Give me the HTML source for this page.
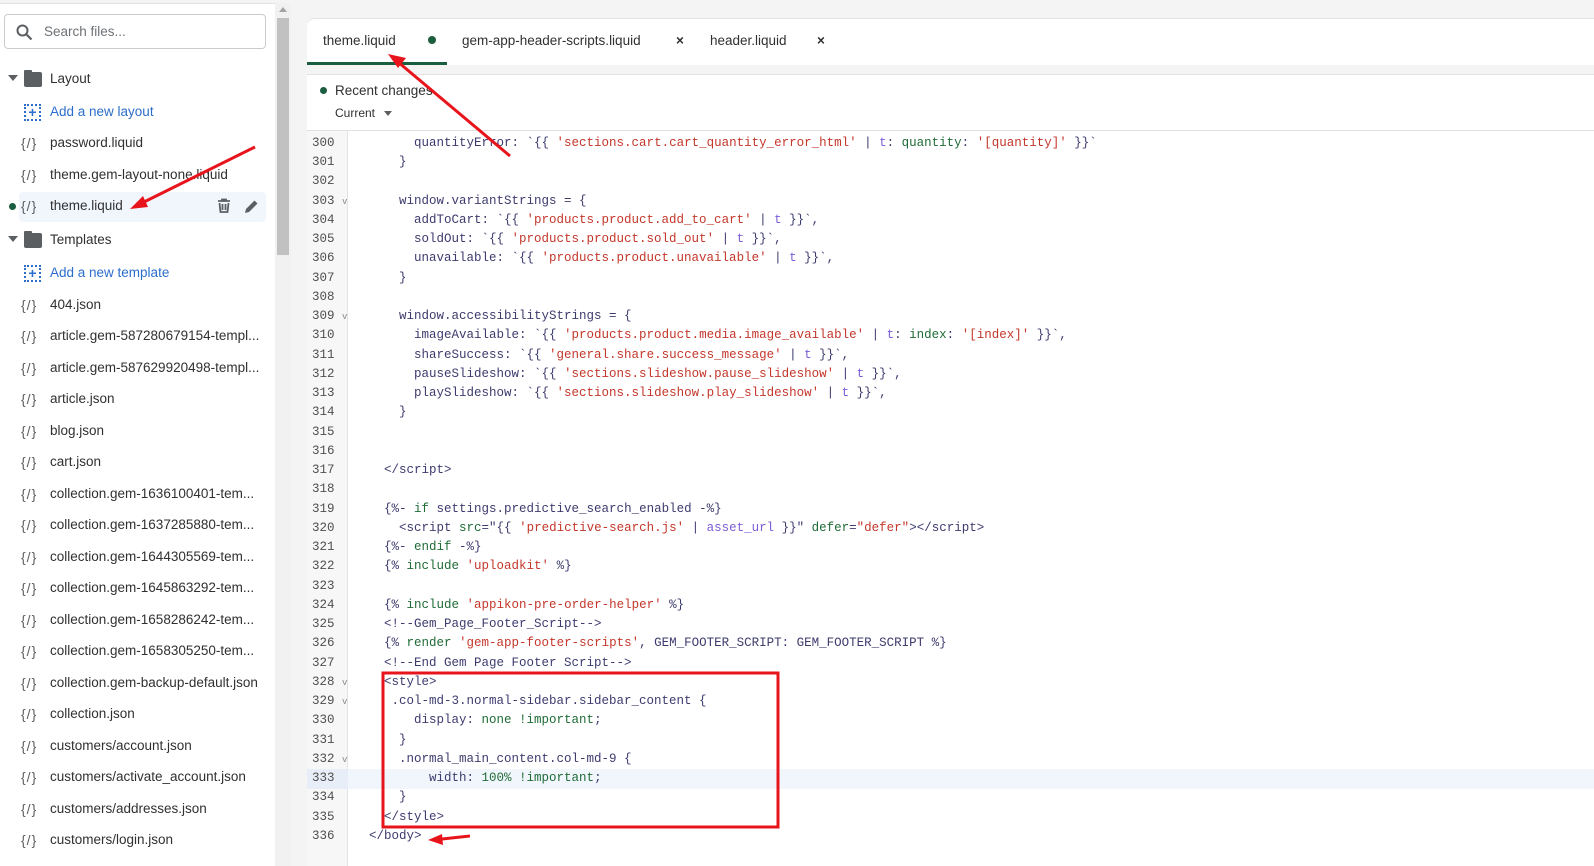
<!DOCTYPE html>
<html><head><meta charset="utf-8"><style>
*{margin:0;padding:0;box-sizing:border-box}
body{width:1594px;height:866px;overflow:hidden;background:#f4f4f4;font-family:"Liberation Sans",sans-serif;position:relative}
.side{position:absolute;left:0;top:3px;width:275px;height:863px;background:#fff;border-top:1px solid #e3e3e3}
.sb{position:absolute;left:275px;top:3px;width:16px;height:863px;background:#f1f1f1}
.thumb{position:absolute;left:277px;top:18px;width:12px;height:237px;background:#c1c1c1}
.search{position:absolute;left:4px;top:14px;width:262px;height:35px;border:1px solid #c9cccf;border-radius:4px;background:#fff}
.search span{position:absolute;left:39px;top:9px;font-size:13.5px;color:#6d7175}
.row{position:absolute;left:0;height:30px;width:270px;font-size:13.5px;color:#303030;line-height:30px}
.row .ic{position:absolute;left:21px;top:0;font-size:14px;color:#5c5f62;letter-spacing:1px}
.row .t{position:absolute;left:50px}
.blue{color:#2c6ecb}
.tabs{position:absolute;left:307px;top:18px;width:1287px;height:47px;background:#fff;border-radius:8px 0 0 0;border-top:1px solid #e1e1e1}
.tab{position:absolute;top:14px;font-size:13.5px;color:#303030}
.panel{position:absolute;left:307px;top:74px;width:1287px;height:792px;background:#fff;border-top:1px solid #e1e1e1}
.gut{position:absolute;left:307px;top:131px;width:41px;height:735px;background:#f7f7f7;border-right:1px solid #e4e4e4}
.code{position:absolute;left:0;top:0;width:1594px;height:866px;font-family:"Liberation Mono",monospace;font-size:12.5px}
.l{position:absolute;left:354px;white-space:pre;color:#3d3b6e;height:19px;line-height:19px}
.n{position:absolute;left:312px;color:#4f4f4f;height:19px;line-height:19px;font-family:"Liberation Mono",monospace;font-size:12.5px}
.n small{font-size:9px;color:#888}
.s{color:#c4372b}.k{color:#1f6b36}.p{color:#7b5cd6}
.fold{position:absolute;left:24px;top:8px;width:18px;height:15px;background:#5c5f62;border-radius:1px 2px 2px 2px}
.fold:before{content:"";position:absolute;left:0;top:-2px;width:8px;height:3px;background:#5c5f62;border-radius:1px 1px 0 0}
</style></head><body>
<div class="side"></div>
<div class="sb"></div><div class="thumb"></div>
<div style="position:absolute;left:279px;top:7px;border:4px solid transparent;border-bottom:5px solid #a3a3a3;border-top:0"></div>
<div class="search"><svg style="position:absolute;left:11px;top:9px" width="17" height="17" viewBox="0 0 17 17"><circle cx="6.5" cy="6.5" r="5" fill="none" stroke="#5c5f62" stroke-width="2"/><path d="M10 10l5.5 5.5" stroke="#5c5f62" stroke-width="2.2"/></svg><span>Search files...</span></div>

<div class="row" style="top:64px"><span style="position:absolute;left:8px;top:11px;border:5px solid transparent;border-top:6px solid #5c5f62;border-bottom:0"></span><span class="fold"></span><span class="t">Layout</span></div>
<div class="row" style="top:97px"><span style="position:absolute;left:24px;top:7px;width:17px;height:17px;border:2px dotted #2c6ecb;color:#2c6ecb;font-size:14px;line-height:12px;text-align:center;font-weight:bold">+</span><span class="t blue">Add a new layout</span></div>
<div class="row" style="top:128px"><span class="ic">{/}</span><span class="t">password.liquid</span></div>
<div class="row" style="top:160px"><span class="ic">{/}</span><span class="t">theme.gem-layout-none.liquid</span></div>
<div class="row" style="top:192px;left:19px;width:247px;background:#f1f6fd;border-radius:4px"></div>
<div style="position:absolute;left:9px;top:203px;width:7px;height:7px;border-radius:50%;background:#1a5d3f"></div>
<div class="row" style="top:191px"><span class="ic">{/}</span><span class="t">theme.liquid</span>
<svg style="position:absolute;left:216px;top:7px" width="16" height="16" viewBox="0 0 16 16"><path d="M2 3h12M6 3V1.5h4V3M3.5 5l1 9h7l1-9M6.5 6v6M9.5 6v6" stroke="#5c5f62" stroke-width="1.8" fill="none"/></svg>
<svg style="position:absolute;left:243px;top:7px" width="17" height="17" viewBox="0 0 17 17"><path d="M2 15l1-4 8.5-8.5 3 3L6 14z M11.5 2.5l3 3" fill="#5c5f62"/></svg></div>
<div class="row" style="top:225px"><span style="position:absolute;left:8px;top:11px;border:5px solid transparent;border-top:6px solid #5c5f62;border-bottom:0"></span><span class="fold"></span><span class="t">Templates</span></div>
<div class="row" style="top:258px"><span style="position:absolute;left:24px;top:7px;width:17px;height:17px;border:2px dotted #2c6ecb;color:#2c6ecb;font-size:14px;line-height:12px;text-align:center;font-weight:bold">+</span><span class="t blue">Add a new template</span></div>
<div class="row" style="top:290px"><span class="ic">{/}</span><span class="t">404.json</span></div>
<div class="row" style="top:321px"><span class="ic">{/}</span><span class="t">article.gem-587280679154-templ...</span></div>
<div class="row" style="top:353px"><span class="ic">{/}</span><span class="t">article.gem-587629920498-templ...</span></div>
<div class="row" style="top:384px"><span class="ic">{/}</span><span class="t">article.json</span></div>
<div class="row" style="top:416px"><span class="ic">{/}</span><span class="t">blog.json</span></div>
<div class="row" style="top:447px"><span class="ic">{/}</span><span class="t">cart.json</span></div>
<div class="row" style="top:479px"><span class="ic">{/}</span><span class="t">collection.gem-1636100401-tem...</span></div>
<div class="row" style="top:510px"><span class="ic">{/}</span><span class="t">collection.gem-1637285880-tem...</span></div>
<div class="row" style="top:542px"><span class="ic">{/}</span><span class="t">collection.gem-1644305569-tem...</span></div>
<div class="row" style="top:573px"><span class="ic">{/}</span><span class="t">collection.gem-1645863292-tem...</span></div>
<div class="row" style="top:605px"><span class="ic">{/}</span><span class="t">collection.gem-1658286242-tem...</span></div>
<div class="row" style="top:636px"><span class="ic">{/}</span><span class="t">collection.gem-1658305250-tem...</span></div>
<div class="row" style="top:668px"><span class="ic">{/}</span><span class="t">collection.gem-backup-default.json</span></div>
<div class="row" style="top:699px"><span class="ic">{/}</span><span class="t">collection.json</span></div>
<div class="row" style="top:731px"><span class="ic">{/}</span><span class="t">customers/account.json</span></div>
<div class="row" style="top:762px"><span class="ic">{/}</span><span class="t">customers/activate_account.json</span></div>
<div class="row" style="top:794px"><span class="ic">{/}</span><span class="t">customers/addresses.json</span></div>
<div class="row" style="top:825px"><span class="ic">{/}</span><span class="t">customers/login.json</span></div>

<div class="tabs">
<span class="tab" style="left:16px">theme.liquid</span>
<span style="position:absolute;left:121px;top:17px;width:8px;height:8px;border-radius:50%;background:#1a5d3f"></span>
<div style="position:absolute;left:0;top:43px;width:140px;height:3px;background:#1a5d3f"></div>
<span class="tab" style="left:155px">gem-app-header-scripts.liquid</span>
<span class="tab" style="left:369px;font-weight:bold">×</span>
<span class="tab" style="left:403px">header.liquid</span>
<span class="tab" style="left:510px;font-weight:bold">×</span>
</div>
<div class="panel">
<span style="position:absolute;left:13px;top:12px;width:7px;height:7px;border-radius:50%;background:#1a5d3f"></span>
<span style="position:absolute;left:28px;top:8px;font-size:13.5px;color:#303030">Recent changes</span>
<span style="position:absolute;left:28px;top:31px;font-size:12px;color:#303030">Current</span>
<span style="position:absolute;left:77px;top:36px;border:4px solid transparent;border-top:5px solid #5c5f62;border-bottom:0"></span>
<div style="position:absolute;left:0;top:55px;width:1287px;height:1px;background:#e1e1e1"></div>
</div>
<div class="gut"></div>
<div style="position:absolute;left:348px;top:769px;width:1246px;height:20px;background:#f1f6fd"></div>
<div style="position:absolute;left:307px;top:769px;width:41px;height:20px;background:#e8eef8"></div>

<div class="code">
<div class="n" style="top:134px">300</div><div class="l" style="top:134px">        quantityError: `{{ <span class="s">'sections.cart.cart_quantity_error_html'</span> | <span class="p">t</span>: <span class="k">quantity</span>: <span class="s">'[quantity]'</span> }}`</div>
<div class="n" style="top:153px">301</div><div class="l" style="top:153px">      }</div>
<div class="n" style="top:172px">302</div>
<div class="n" style="top:192px">303 <small>v</small></div><div class="l" style="top:192px">      window.variantStrings = {</div>
<div class="n" style="top:211px">304</div><div class="l" style="top:211px">        addToCart: `{{ <span class="s">'products.product.add_to_cart'</span> | <span class="p">t</span> }}`,</div>
<div class="n" style="top:230px">305</div><div class="l" style="top:230px">        soldOut: `{{ <span class="s">'products.product.sold_out'</span> | <span class="p">t</span> }}`,</div>
<div class="n" style="top:249px">306</div><div class="l" style="top:249px">        unavailable: `{{ <span class="s">'products.product.unavailable'</span> | <span class="p">t</span> }}`,</div>
<div class="n" style="top:269px">307</div><div class="l" style="top:269px">      }</div>
<div class="n" style="top:288px">308</div>
<div class="n" style="top:307px">309 <small>v</small></div><div class="l" style="top:307px">      window.accessibilityStrings = {</div>
<div class="n" style="top:326px">310</div><div class="l" style="top:326px">        imageAvailable: `{{ <span class="s">'products.product.media.image_available'</span> | <span class="p">t</span>: <span class="k">index</span>: <span class="s">'[index]'</span> }}`,</div>
<div class="n" style="top:346px">311</div><div class="l" style="top:346px">        shareSuccess: `{{ <span class="s">'general.share.success_message'</span> | <span class="p">t</span> }}`,</div>
<div class="n" style="top:365px">312</div><div class="l" style="top:365px">        pauseSlideshow: `{{ <span class="s">'sections.slideshow.pause_slideshow'</span> | <span class="p">t</span> }}`,</div>
<div class="n" style="top:384px">313</div><div class="l" style="top:384px">        playSlideshow: `{{ <span class="s">'sections.slideshow.play_slideshow'</span> | <span class="p">t</span> }}`,</div>
<div class="n" style="top:403px">314</div><div class="l" style="top:403px">      }</div>
<div class="n" style="top:423px">315</div>
<div class="n" style="top:442px">316</div>
<div class="n" style="top:461px">317</div><div class="l" style="top:461px">    &lt;/script&gt;</div>
<div class="n" style="top:480px">318</div>
<div class="n" style="top:500px">319</div><div class="l" style="top:500px">    {%- <span class="k">if</span> settings.predictive_search_enabled -%}</div>
<div class="n" style="top:519px">320</div><div class="l" style="top:519px">      &lt;script <span class="k">src</span>="{{ <span class="s">'predictive-search.js'</span> | <span class="p">asset_url</span> }}" <span class="k">defer</span>=<span class="s">"defer"</span>&gt;&lt;/script&gt;</div>
<div class="n" style="top:538px">321</div><div class="l" style="top:538px">    {%- <span class="k">endif</span> -%}</div>
<div class="n" style="top:557px">322</div><div class="l" style="top:557px">    {% <span class="k">include</span> <span class="s">'uploadkit'</span> %}</div>
<div class="n" style="top:577px">323</div>
<div class="n" style="top:596px">324</div><div class="l" style="top:596px">    {% <span class="k">include</span> <span class="s">'appikon-pre-order-helper'</span> %}</div>
<div class="n" style="top:615px">325</div><div class="l" style="top:615px">    &lt;!--Gem_Page_Footer_Script--&gt;</div>
<div class="n" style="top:634px">326</div><div class="l" style="top:634px">    {% <span class="k">render</span> <span class="s">'gem-app-footer-scripts'</span>, GEM_FOOTER_SCRIPT: GEM_FOOTER_SCRIPT %}</div>
<div class="n" style="top:654px">327</div><div class="l" style="top:654px">    &lt;!--End Gem Page Footer Script--&gt;</div>
<div class="n" style="top:673px">328 <small>v</small></div><div class="l" style="top:673px">    &lt;style&gt;</div>
<div class="n" style="top:692px">329 <small>v</small></div><div class="l" style="top:692px">     .col-md-3.normal-sidebar.sidebar_content {</div>
<div class="n" style="top:711px">330</div><div class="l" style="top:711px">        display: <span class="k">none !important</span>;</div>
<div class="n" style="top:731px">331</div><div class="l" style="top:731px">      }</div>
<div class="n" style="top:750px">332 <small>v</small></div><div class="l" style="top:750px">      .normal_main_content.col-md-9 {</div>
<div class="n" style="top:769px">333</div><div class="l" style="top:769px">          width: <span class="k">100% !important</span>;</div>
<div class="n" style="top:788px">334</div><div class="l" style="top:788px">      }</div>
<div class="n" style="top:808px">335</div><div class="l" style="top:808px">    &lt;/style&gt;</div>
<div class="n" style="top:827px">336</div><div class="l" style="top:827px">  &lt;/body&gt;</div>
</div>

<svg style="position:absolute;left:0;top:0" width="1594" height="866">
<rect x="383" y="673" width="395" height="154" fill="none" stroke="#e8141c" stroke-width="3"/>
<path d="M510 156L398 62" stroke="#e8141c" stroke-width="3"/><path d="M388 54l18 4-8 10z" fill="#e8141c"/>
<path d="M255 147L142 203" stroke="#e8141c" stroke-width="3"/><path d="M130 209l13-13 5 11z" fill="#e8141c"/>
<path d="M470 836L442 839" stroke="#e8141c" stroke-width="3"/><path d="M428 840l14-6 1 11z" fill="#e8141c"/>
</svg>
</body></html>
